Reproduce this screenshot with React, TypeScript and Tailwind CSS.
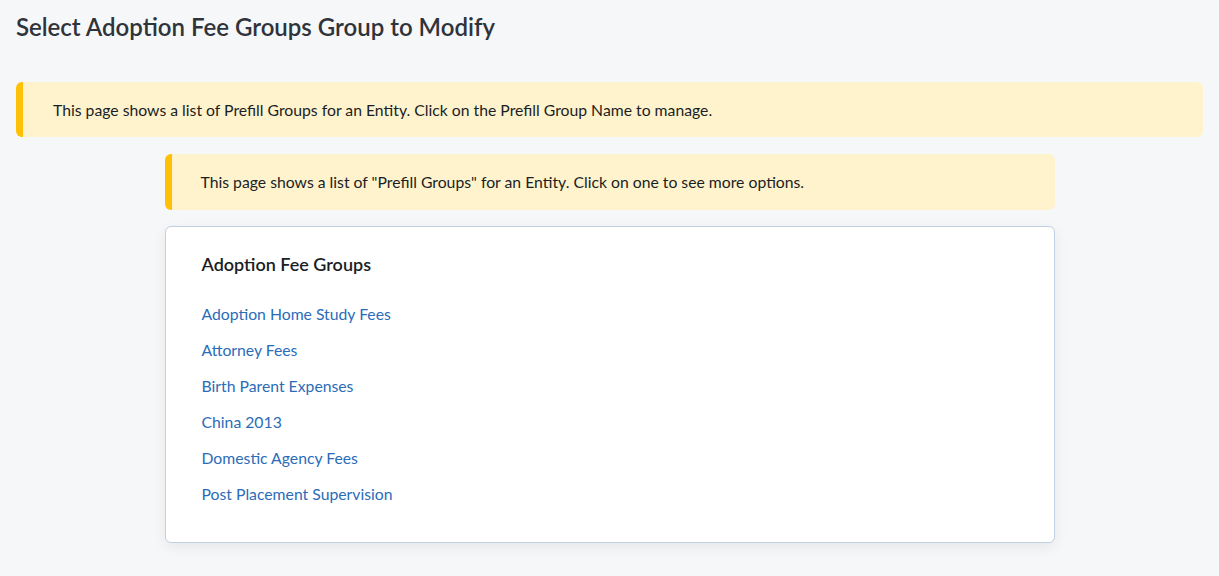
const groups = [
  'Adoption Home Study Fees',
  'Attorney Fees',
  'Birth Parent Expenses',
  'China 2013',
  'Domestic Agency Fees',
  'Post Placement Supervision',
];

export default function App() {
  return (
    <div className="min-h-[576px] bg-[#f6f7f9] px-4 pt-[12px] pb-8 font-['Lato','Noto_Sans',sans-serif] text-[#1b1e24]">
      {/* page title */}
      <h1 className="text-[24px] leading-[30px] font-semibold text-[#2f333a]">
        Select Adoption Fee Groups Group to Modify
      </h1>

      {/* page-level notice */}
      <div className="mt-[40px] flex h-[55px] items-center rounded-md border-l-[7px] border-[#ffc107] bg-[#fff3cd] pl-[30px] pt-[1px] text-[15.75px]">
        This page shows a list of Prefill Groups for an Entity. Click on the Prefill Group Name to manage.
      </div>

      <div className="mx-auto mt-[17px] w-[890px]">
        {/* list notice */}
        <div className="flex h-[56px] items-center rounded-md border-l-[7px] border-[#ffc107] bg-[#fff3cd] pl-[29px] text-[15.75px]">
          This page shows a list of &quot;Prefill Groups&quot; for an Entity. Click on one to see more options.
        </div>

        {/* groups card */}
        <div className="mt-[16px] rounded-md border border-[#c3cfe2] bg-white px-[36px] pt-[25px] pb-[37px] shadow-[0_4px_14px_rgba(0,0,0,0.07)]">
          <h2 className="text-[18px] leading-[24px] font-semibold text-[#1b1e24]">Adoption Fee Groups</h2>
          <ul className="mt-[27px] flex flex-col gap-[14px]">
            {groups.map((g) => (
              <li key={g} className="text-[15.75px] leading-[22px]">
                <a href="#" className="text-[#2b6cb8] hover:underline">
                  {g}
                </a>
              </li>
            ))}
          </ul>
        </div>
      </div>
    </div>
  );
}
